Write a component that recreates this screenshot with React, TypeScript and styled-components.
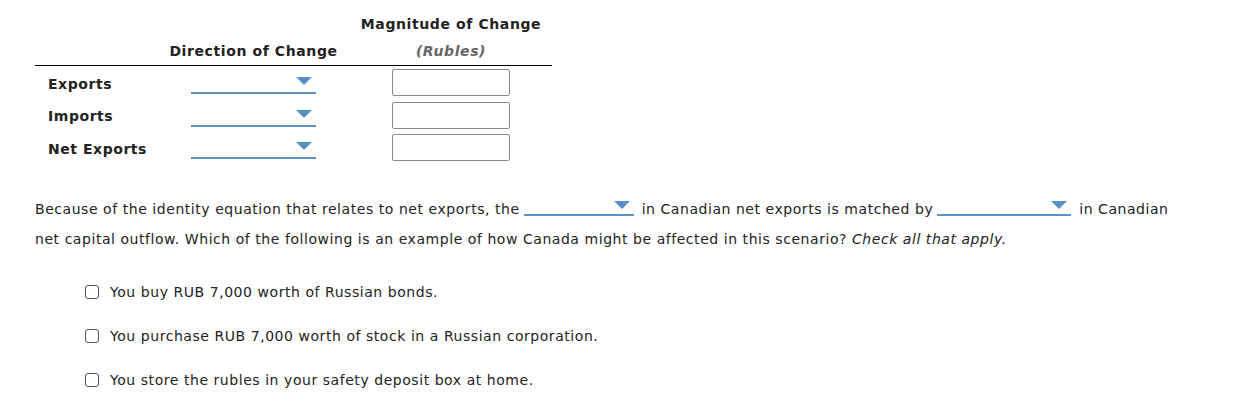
import React from "react";
import styled, { createGlobalStyle } from "styled-components";

const Global = createGlobalStyle`
  body {
    margin: 0;
    background: #ffffff;
    font-family: "DejaVu Sans", Verdana, sans-serif;
    font-size: 14px;
    letter-spacing: 0.55px;
    color: #222;
  }
`;

const Page = styled.div`
  padding: 11px 0 0 35px;
`;

const Table = styled.div`
  width: 517px;
  display: grid;
  grid-template-columns: 135px 167px 215px;
`;

const HeadCell = styled.div`
  display: flex;
  flex-direction: column;
  align-items: center;
  justify-content: flex-end;
  font-weight: bold;
  line-height: 27px;
  letter-spacing: 0.6px;
  white-space: nowrap;
  border-bottom: 1px solid #000;
`;

const HeadCellOffset = styled(HeadCell)`
  padding-left: 13px;
`;

const Sub = styled.span`
  font-style: italic;
  color: #666;
`;

const Label = styled.div`
  font-weight: bold;
  padding: 3px 0 0 13px;
  height: 32.5px;
  box-sizing: border-box;
  display: flex;
  align-items: center;
`;

const Cell = styled.div`
  display: flex;
  align-items: center;
  justify-content: center;
  height: 32.5px;
  padding-top: 1px;
  box-sizing: border-box;
`;

const CellOffset = styled(Cell)`
  padding-left: 13px;
`;

const Select = styled.div<{ $w: number }>`
  position: relative;
  display: inline-block;
  width: ${(p) => p.$w}px;
  height: 21px;
  border-bottom: 2px solid #5c94c5;
  vertical-align: middle;
`;

const Arrow = styled.span`
  position: absolute;
  right: 4px;
  top: 6px;
  width: 0;
  height: 0;
  border-left: 8px solid transparent;
  border-right: 8px solid transparent;
  border-top: 8px solid #5592c8;
`;

const Input = styled.div`
  width: 116px;
  height: 25px;
  border: 1px solid #8a8a8a;
  border-radius: 2px;
`;

const Para = styled.p`
  margin: 30px 0 0 0;
  line-height: 30px;
  width: 1150px;
`;

const InlineSelect = styled(Select)`
  margin: 0 8px 0 4px;
  height: 19px;
  top: -4px;
`;

const List = styled.div`
  margin: 27px 0 0 50px;
  display: flex;
  flex-direction: column;
  gap: 22px;
`;

const Item = styled.label`
  display: flex;
  align-items: center;
  gap: 11px;
  line-height: 22px;
`;

const Box = styled.span`
  width: 12px;
  height: 12px;
  border: 1px solid #555;
  border-radius: 3px;
  background: #fff;
`;

const Em = styled.i``;

const rows = ["Exports", "Imports", "Net Exports"];
const items = [
  "You buy RUB 7,000 worth of Russian bonds.",
  "You purchase RUB 7,000 worth of stock in a Russian corporation.",
  "You store the rubles in your safety deposit box at home.",
];

export default function App() {
  return (
    <Page>
      <Global />
      <Table>
        <HeadCell />
        <HeadCell>Direction of Change</HeadCell>
        <HeadCellOffset>
          <span>Magnitude of Change</span>
          <Sub>(Rubles)</Sub>
        </HeadCellOffset>
        {rows.map((r) => (
          <React.Fragment key={r}>
            <Label>{r}</Label>
            <Cell>
              <Select $w={125}>
                <Arrow />
              </Select>
            </Cell>
            <CellOffset>
              <Input />
            </CellOffset>
          </React.Fragment>
        ))}
      </Table>
      <Para>
        Because of the identity equation that relates to net exports, the
        <InlineSelect $w={110}>
          <Arrow />
        </InlineSelect>
        in Canadian net exports is matched by
        <InlineSelect $w={134}>
          <Arrow />
        </InlineSelect>
        in Canadian net capital outflow. Which of the following is an example of how Canada
        might be affected in this scenario? <Em>Check all that apply.</Em>
      </Para>
      <List>
        {items.map((t) => (
          <Item key={t}>
            <Box />
            {t}
          </Item>
        ))}
      </List>
    </Page>
  );
}
